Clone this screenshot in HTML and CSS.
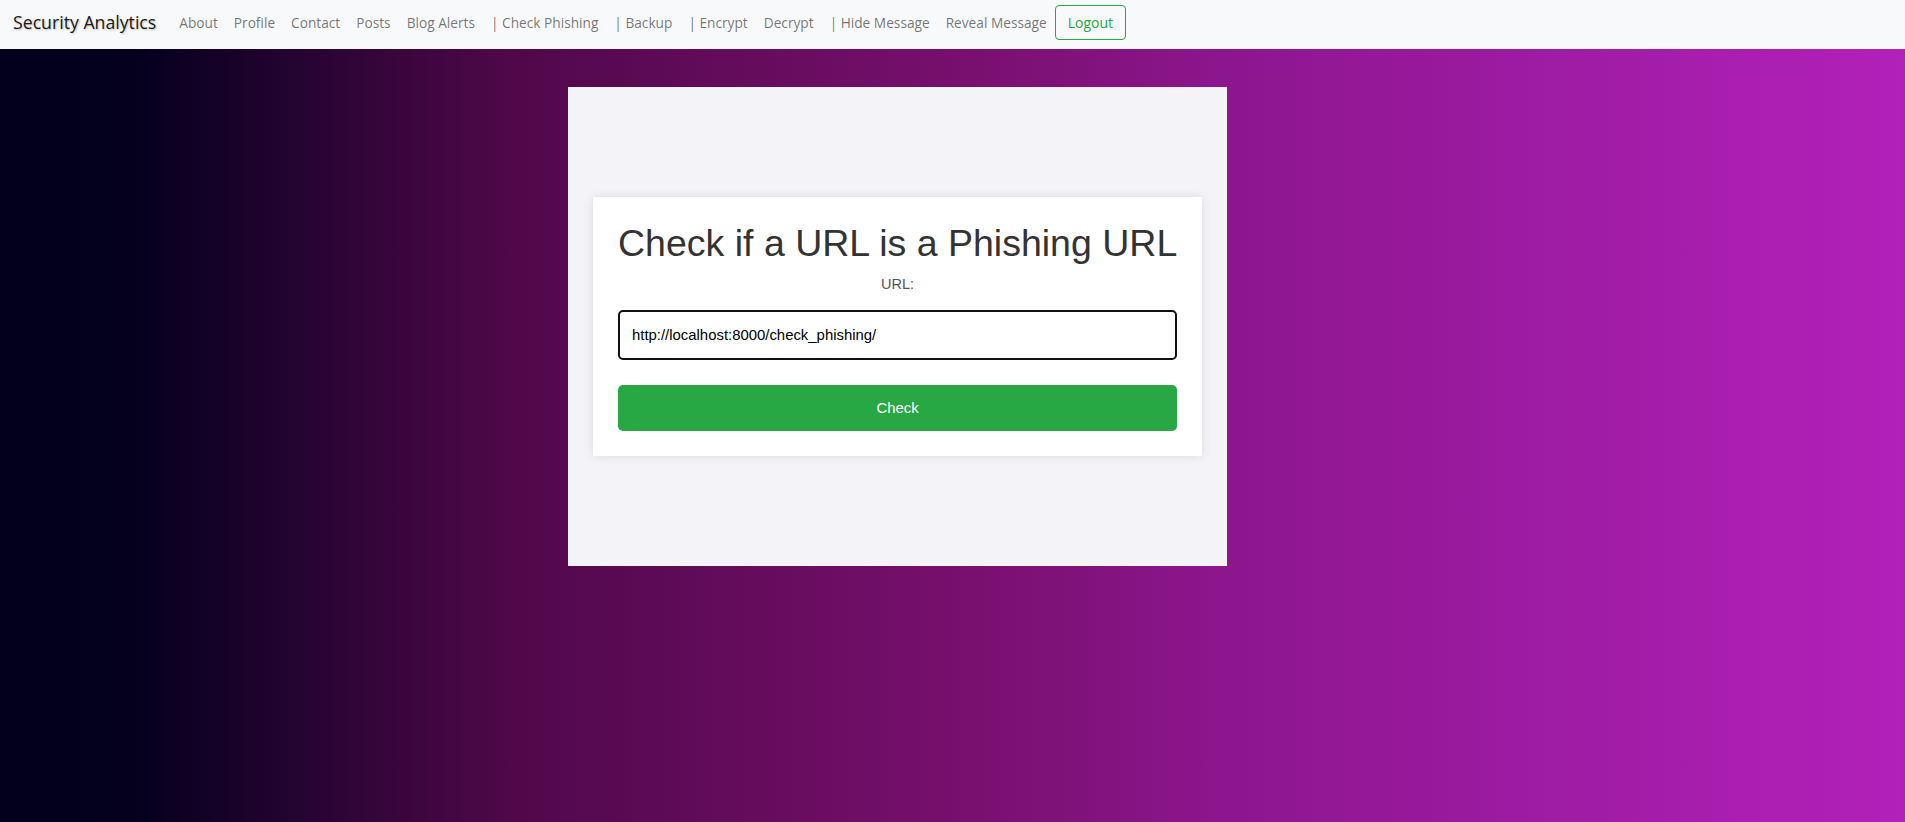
FILE: index.html
```html
<!DOCTYPE html>
<html lang="en">
<head>
<meta charset="utf-8">
<title>Check Phishing</title>
<link rel="stylesheet" href="styles.css">
</head>
<body>
<nav class="navbar">
  <a class="brand" href="#">Security Analytics</a>
  <ul class="nav">
    <li><a class="nav-link" href="#">About</a></li>
    <li><a class="nav-link" href="#">Profile</a></li>
    <li><a class="nav-link" href="#">Contact</a></li>
    <li><a class="nav-link" href="#">Posts</a></li>
    <li><a class="nav-link" href="#">Blog Alerts</a></li>
    <li><a class="nav-link" href="#">| Check Phishing</a></li>
    <li><a class="nav-link" href="#">| Backup</a></li>
    <li><a class="nav-link" href="#">| Encrypt</a></li>
    <li><a class="nav-link" href="#">Decrypt</a></li>
    <li><a class="nav-link" href="#">| Hide Message</a></li>
    <li><a class="nav-link" href="#">Reveal Message</a></li>
    <li><a class="btn-logout" href="#">Logout</a></li>
  </ul>
</nav>
<main class="main">
  <section class="panel">
    <form class="card">
      <h1 class="title">Check if a URL is a Phishing URL</h1>
      <label class="label" for="url">URL:</label>
      <input class="url-input" id="url" type="text" value="http://localhost:8000/check_phishing/">
      <button class="btn-check" type="button">Check</button>
    </form>
  </section>
</main>
</body>
</html>
```
FILE: styles.css
```css
* { box-sizing: border-box; }
html, body { margin: 0; padding: 0; }
body {
  min-height: 822px;
  background: linear-gradient(to right, #02001c 0%, #04001e 7%, #50084a 27%, #7a1070 52%, #8c168e 64%, #b221ba 100%);
  font-family: "Open Sans", "Noto Sans", sans-serif;
}
.navbar {
  height: 49px;
  background: #f8f9fa;
  display: flex;
  align-items: center;
  padding-left: 13px;
  padding-bottom: 5px;
}
.brand {
  font-size: 17.7px;
  color: rgba(0,0,0,0.9);
  text-decoration: none;
  text-shadow: 1px 1px 2px rgba(0,0,0,0.25);
  margin-right: 15px;
  white-space: nowrap;
}
.nav {
  list-style: none;
  margin: 0;
  padding: 0;
  display: flex;
  align-items: center;
}
.nav-link {
  display: block;
  padding: 0 8px;
  font-size: 13.7px;
  color: rgba(0,0,0,0.55);
  text-decoration: none;
  white-space: nowrap;
}
.btn-logout {
  display: flex;
  align-items: center;
  height: 35px;
  padding: 0 12px;
  border: 1px solid #28a745;
  border-radius: 4px;
  color: #28a745;
  font-size: 14px;
  text-decoration: none;
}
.main {
  padding-top: 38px;
  padding-left: 568px;
}
.panel {
  width: 659px;
  height: 479px;
  background: #f3f3f8;
  padding: 0 25px;
  display: flex;
  align-items: center;
}
.card {
  width: 100%;
  background: #fff;
  padding: 25px;
  box-shadow: 0 0 10px rgba(0,0,0,0.1);
  display: flex;
  flex-direction: column;
  font-family: "Liberation Sans", Arial, sans-serif;
}
.title {
  margin: 0;
  font-size: 37.5px;
  line-height: 43px;
  font-weight: normal;
  color: #333;
  text-align: center;
  white-space: nowrap;
}
.label {
  margin-top: 11px;
  font-size: 14.5px;
  line-height: 17px;
  color: #555;
  text-align: center;
}
.url-input {
  margin-top: 17px;
  height: 50px;
  border: 2px solid #111;
  border-radius: 5px;
  padding: 0 12px;
  font-family: "Liberation Sans", Arial, sans-serif;
  font-size: 14.9px;
  color: #000;
  background: #fff;
}
.btn-check {
  margin-top: 25px;
  height: 46px;
  border: none;
  border-radius: 5px;
  background: #28a745;
  color: #fff;
  font-family: "Liberation Sans", Arial, sans-serif;
  font-size: 14.9px;
}
```
